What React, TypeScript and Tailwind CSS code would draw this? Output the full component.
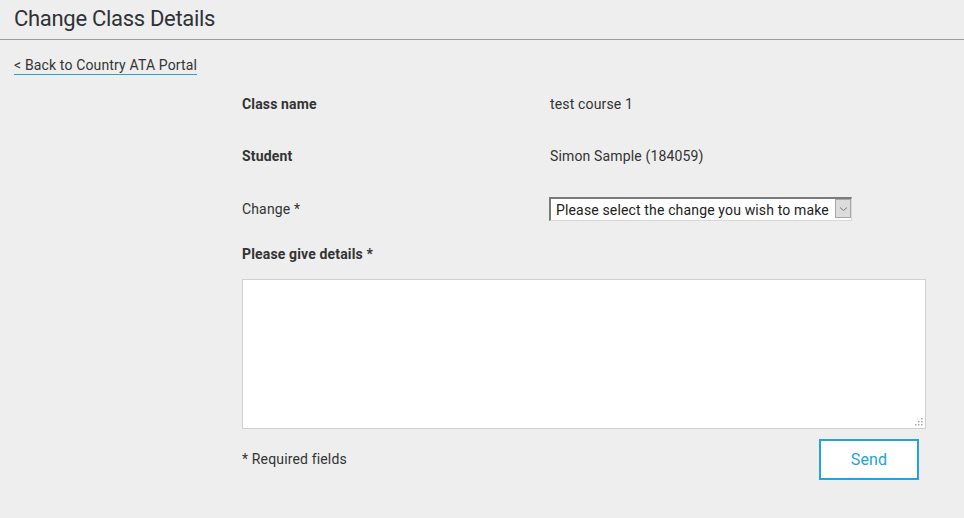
import React from "react";

export default function App() {
  return (
    <div className="min-h-[518px] w-full bg-[#eeeeee] text-[#333333] tracking-[0.15px]" style={{ fontFamily: "Roboto, 'Liberation Sans', sans-serif" }}>
      <div className="h-[40px] border-b border-[#9a9a9a] pl-[14px] pt-[5px]">
        <h1 className="text-[22px] leading-[28px] tracking-[-0.3px] text-[#2f3237]">Change Class Details</h1>
      </div>
      <div className="mt-[13px] pl-[14px]">
        <a href="#" className="inline-block border-b border-[#2a9fd6] text-[14px] leading-[18px] text-[#333333]">
          &lt; Back to Country ATA Portal
        </a>
      </div>
      <div className="ml-[242px] mt-[1px] w-[684px]">
        <div className="flex h-[52px] items-center text-[14px]">
          <div className="w-[308px] font-bold">Class name</div>
          <div>test course 1</div>
        </div>
        <div className="flex h-[52px] items-center text-[14px]">
          <div className="w-[308px] font-bold">Student</div>
          <div>Simon Sample (184059)</div>
        </div>
        <div className="flex h-[54px] items-center text-[14px]">
          <div className="w-[307px]">Change *</div>
          <div className="relative h-[24px] w-[303px]">
            <select
              className="h-full w-full appearance-none border-t-2 border-l-2 border-b border-r border-t-[#7a7a7a] border-l-[#7a7a7a] border-b-[#d8d8d8] border-r-[#d8d8d8] bg-white pl-[5px] text-[14px] leading-[20px] tracking-[0.15px] text-[#222222] outline-none"
              style={{ fontFamily: "Roboto, 'Liberation Sans', sans-serif" }}
              defaultValue=""
            >
              <option value="">Please select the change you wish to make</option>
            </select>
            <div className="pointer-events-none absolute right-[1px] top-[2px] flex h-[19px] w-[16px] items-center justify-center border border-[#a8a8a8] bg-[#dcdcdc]">
              <svg width="9" height="6" viewBox="0 0 9 6">
                <path d="M1 1.5 L4.5 4.5 L8 1.5" stroke="#777" strokeWidth="1" fill="none" />
              </svg>
            </div>
          </div>
        </div>
        <div className="mt-[8px] h-[20px] text-[14px] font-bold leading-[20px]">Please give details *</div>
        <div className="relative mt-[15px]">
          <textarea className="block h-[150px] w-[684px] resize-none border border-[#cfcfcf] bg-white outline-none" />
          <svg className="pointer-events-none absolute bottom-[3px] right-[3px]" width="8" height="8" viewBox="0 0 8 8">
            <rect x="6" y="0" width="1.5" height="1.5" fill="#aaa" />
            <rect x="3" y="3" width="1.5" height="1.5" fill="#aaa" />
            <rect x="6" y="3" width="1.5" height="1.5" fill="#aaa" />
            <rect x="0" y="6" width="1.5" height="1.5" fill="#aaa" />
            <rect x="3" y="6" width="1.5" height="1.5" fill="#aaa" />
            <rect x="6" y="6" width="1.5" height="1.5" fill="#aaa" />
          </svg>
        </div>
        <div className="mr-[7px] mt-[10px] flex items-center justify-between">
          <div className="text-[14px]">* Required fields</div>
          <button className="h-[41px] w-[100px] border-2 border-[#22a3da] bg-white text-[16px] text-[#22a3da]">Send</button>
        </div>
      </div>
    </div>
  );
}
